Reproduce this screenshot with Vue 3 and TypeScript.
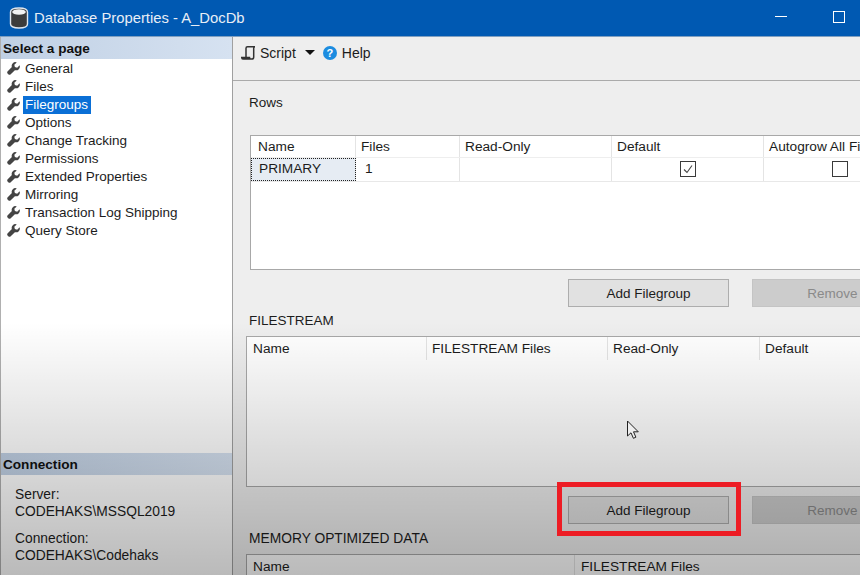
<script setup lang="ts">
const pages: string[] = ['General', 'Files', 'Filegroups', 'Options', 'Change Tracking', 'Permissions', 'Extended Properties', 'Mirroring', 'Transaction Log Shipping', 'Query Store']
</script>

<template>
  <div class="window">
    <header class="titlebar">
      <svg class="dbicon" width="20" height="22" viewBox="0 0 20 22">
        <path d="M1.500 5C1.500 2.500 5 1 10 1s8.500 1.500 8.500 4v12c0 2.500-3.500 4-8.500 4s-8.500-1.500-8.500-4z" fill="#3c3c3c" stroke="#dfe6ee" stroke-width="1.400"/>
        <ellipse cx="10" cy="5" rx="6.800" ry="2.800" fill="#f2f2f2"/>
      </svg>
      <span class="title">Database Properties - A_DocDb</span>
      <span class="minimize"></span>
      <span class="maximize"></span>
    </header>
    <div class="body">
      <aside class="sidebar">
        <div class="side-head">Select a page</div>
        <ul class="pages">
          <li v-for="p in pages" :key="p" class="page">
            <svg class="wrench" width="13" height="13" viewBox="0 0 16 16">
              <path d="M15.500 4l-3 3-2.800-.7-.7-2.800 3-3A4.600 4.600 0 0 0 6 6.300L.9 11.400a2.200 2.200 0 0 0 0 3l.7.700a2.200 2.200 0 0 0 3 0L9.700 10a4.600 4.600 0 0 0 5.800-6z" fill="#444"/>
            </svg>
            <span class="page-name" :class="{ selected: p === 'Filegroups' }">{{ p }}</span>
          </li>
        </ul>
        <div class="side-head conn-head">Connection</div>
        <div class="conn">
          <p>Server:<br>CODEHAKS\MSSQL2019</p>
          <p>Connection:<br>CODEHAKS\Codehaks</p>
        </div>
      </aside>
      <main class="main">
        <div class="toolbar">
          <svg width="15" height="14" viewBox="0 0 15 14" class="script-icon">
            <path d="M5 11V2.200C5 1.300 5.600.8 6.500.8H14c-.8 0-1.300.6-1.300 1.400v8.800c0 1.200-.8 2.100-2 2.100H2.500C1.500 13.100.8 12.500.7 11.500h7.800c.1 1 .8 1.600 2 1.600" fill="none" stroke="#333" stroke-width="1.500"/>
          </svg>
          <span class="tool-label">Script</span>
          <span class="caret"></span>
          <span class="help-icon">?</span>
          <span class="tool-label">Help</span>
        </div>
        <div class="content">
          <div class="label rows-label">Rows</div>
          <div class="grid rows-grid">
            <div class="tr head">
              <div class="td c1">Name</div>
              <div class="td c2">Files</div>
              <div class="td c3">Read-Only</div>
              <div class="td c4">Default</div>
              <div class="td c5">Autogrow All Files</div>
            </div>
            <div class="tr data">
              <div class="td c1 focus">PRIMARY</div>
              <div class="td c2 one">1</div>
              <div class="td c3"></div>
              <div class="td c4 center">
                <span class="check">
                  <svg width="12" height="12" viewBox="0 0 12 12"><path d="M2 6.500l3 3 5-7" fill="none" stroke="#444" stroke-width="1.100"/></svg>
                </span>
              </div>
              <div class="td c5 center"><span class="check"></span></div>
            </div>
          </div>
          <div class="buttons first">
            <button class="btn">Add Filegroup</button>
            <button class="btn off">Remove</button>
          </div>
          <div class="label fs-label">FILESTREAM</div>
          <div class="grid fs-grid">
            <div class="tr head">
              <div class="td f1">Name</div>
              <div class="td f2">FILESTREAM Files</div>
              <div class="td f3">Read-Only</div>
              <div class="td f4">Default</div>
            </div>
          </div>
          <div class="buttons second">
            <div class="callout"><button class="btn">Add Filegroup</button></div>
            <button class="btn off">Remove</button>
          </div>
          <div class="label mem-label">MEMORY OPTIMIZED DATA</div>
          <div class="grid mem-grid">
            <div class="tr head">
              <div class="td m1">Name</div>
              <div class="td m2">FILESTREAM Files</div>
            </div>
          </div>
        </div>
      </main>
    </div>
    <div class="shade"></div>
    <svg class="cursor" width="15" height="21" viewBox="0 0 15 21">
      <path d="M1.500 1v15l3.500-3.200 2.400 5.500 2.500-1.100-2.400-5.400h4.800z" fill="#eee" stroke="#222" stroke-width="1"/>
    </svg>
  </div>
</template>

<style>
html, body { margin: 0; padding: 0; background: #f0f0f0; }
</style>

<style scoped>
.window {
  position: relative;
  width: 860px;
  height: 575px;
  overflow: hidden;
  background: #eeeeee;
  font-family: "Liberation Sans", Arial, sans-serif;
  font-size: 13.500px;
  color: #1c1c1c;
  display: flex;
  flex-direction: column;
}
.titlebar {
  flex: none;
  height: 37px;
  background: #0059b2;
  border-bottom: 1px solid #7f9fc0;
  box-sizing: border-box;
  display: flex;
  align-items: center;
  padding-left: 9px;
  color: #e8eef6;
}
.dbicon { flex: none; margin-right: 5px; }
.title { font-size: 14.800px; flex: 1; }
.minimize { width: 12px; height: 1px; background: #fff; margin-right: 46px; margin-top: -4px; }
.maximize { width: 10px; height: 10px; border: 1px solid #fff; margin-right: 15px; margin-top: -2px; }
.body { flex: 1; display: flex; min-height: 0; }
.sidebar {
  flex: none;
  width: 233px;
  box-sizing: border-box;
  background: #fff;
  border-left: 1px solid #b0b0b0;
  border-right: 1px solid #a0a0a0;
  display: flex;
  flex-direction: column;
}
.side-head {
  height: 22px;
  line-height: 23px;
  padding-left: 2px;
  font-weight: bold;
  font-size: 13.600px;
  background: linear-gradient(to right, #c0d0e4, #d6e2f1);
  color: #111;
  flex: none;
}
.pages { list-style: none; margin: 0; padding: 1px 0 0; flex: 1; }
.page { height: 18px; display: flex; align-items: center; padding-left: 6px; }
.wrench { flex: none; margin-right: 4px; margin-top: -2px; }
.page-name { padding: 0 3px 0 2px; height: 18px; line-height: 18px; margin-left: -1px; }
.selected { background: #0a6fd6; color: #fff; }
.conn {
  height: 100px;
  padding: 11px 0 0 14px;
  box-sizing: border-box;
  line-height: 17px;
  font-size: 13.800px;
}
.conn p { margin: 0 0 10px; }
.main { flex: 1; min-width: 0; display: flex; flex-direction: column; }
.toolbar {
  flex: none;
  height: 44px;
  box-sizing: border-box;
  border-bottom: 1px solid #aaaaaa;
  padding: 0 0 12px 8px;
  display: flex;
  align-items: center;
}
.script-icon { margin-right: 4px; }
.tool-label { font-size: 14px; }
.caret {
  width: 0; height: 0;
  border-left: 5px solid transparent;
  border-right: 5px solid transparent;
  border-top: 5px solid #111;
  margin: 0 8px 0 9px;
}
.help-icon {
  width: 14px; height: 14px;
  border-radius: 50%;
  background: #1c8ce0;
  color: #fff;
  font-weight: bold;
  font-size: 11px;
  line-height: 14px;
  text-align: center;
  margin-right: 5px;
}
.content { flex: 1; min-height: 0; padding-left: 13px; display: flex; flex-direction: column; align-items: flex-start; }
.label { height: 18px; line-height: 18px; padding-left: 3px; }
.rows-label { margin: 13px 0 0; }
.grid {
  background: #fff;
  border: 1px solid #a8a8a8;
  box-sizing: border-box;
  width: 700px;
  flex: none;
  font-size: 13.700px;
}
.rows-grid { height: 135px; margin: 23px 0 0 4px; }
.fs-grid { height: 151px; margin-top: 6px; }
.mem-grid { height: 60px; margin-top: 6px; }
.tr { display: flex; }
.head { height: 21px; border-bottom: 1px solid #eeeeee; }
.fs-grid .head, .mem-grid .head { border-bottom: 0; height: 23px; }
.fs-grid .td, .mem-grid .td { line-height: 23px; }
.data { height: 23px; border-bottom: 1px solid #e8e8e8; }
.td {
  box-sizing: border-box;
  border-right: 1px solid #e4e4e4;
  padding-left: 5px;
  line-height: 21px;
  white-space: nowrap;
  overflow: hidden;
  flex: none;
}
.c1 { width: 105px; padding-left: 7px; }
.c2 { width: 104px; }
.c3 { width: 152px; }
.c4 { width: 152px; }
.c5 { width: 152px; border-right: 0; }
.f1 { width: 180px; padding-left: 6px; }
.f2 { width: 181px; }
.f3 { width: 152px; }
.f4 { width: 187px; }
.m1 { width: 328px; padding-left: 6px; }
.m2 { width: 372px; padding-left: 6px; }
.focus { background: #e6ecf3; outline: 1px dotted #222; outline-offset: -1px; padding-left: 8px; }
.one { padding-left: 9px; }
.center { display: flex; align-items: center; justify-content: center; padding: 0 0 2px; }
.check {
  width: 14px; height: 14px;
  border: 1px solid #3a3a3a;
  display: flex;
  align-items: center;
  justify-content: center;
  flex: none;
}
.buttons { display: flex; gap: 23px; padding-left: 322px; flex: none; }
.buttons.first { margin-top: 9px; }
.buttons.second { margin-top: 9px; }
.btn {
  width: 161px;
  height: 28px;
  box-sizing: border-box;
  border: 1px solid #adadad;
  background: #e1e1e1;
  font: inherit;
  color: #1c1c1c;
  padding: 0;
  flex: none;
}
.btn.off { background: #cccccc; border-color: #c4c4c4; color: #8a8a8a; }
.fs-label { margin-top: 5px; }
.mem-label { margin-top: 6px; font-size: 13.800px; }
.callout { position: relative; width: 161px; height: 28px; flex: none; }
.callout::after {
  content: "";
  position: absolute;
  left: -11px; right: -12px; top: -14px; bottom: -12px;
  border: 5px solid #ed1c24;
  z-index: 3;
}
.shade {
  position: absolute;
  inset: 0;
  background: linear-gradient(to bottom, rgba(0,0,0,0) 56%, rgba(0,0,0,.27) 100%);
  pointer-events: none;
  z-index: 2;
}
.cursor { position: absolute; left: 626px; top: 420px; z-index: 3; }
</style>
